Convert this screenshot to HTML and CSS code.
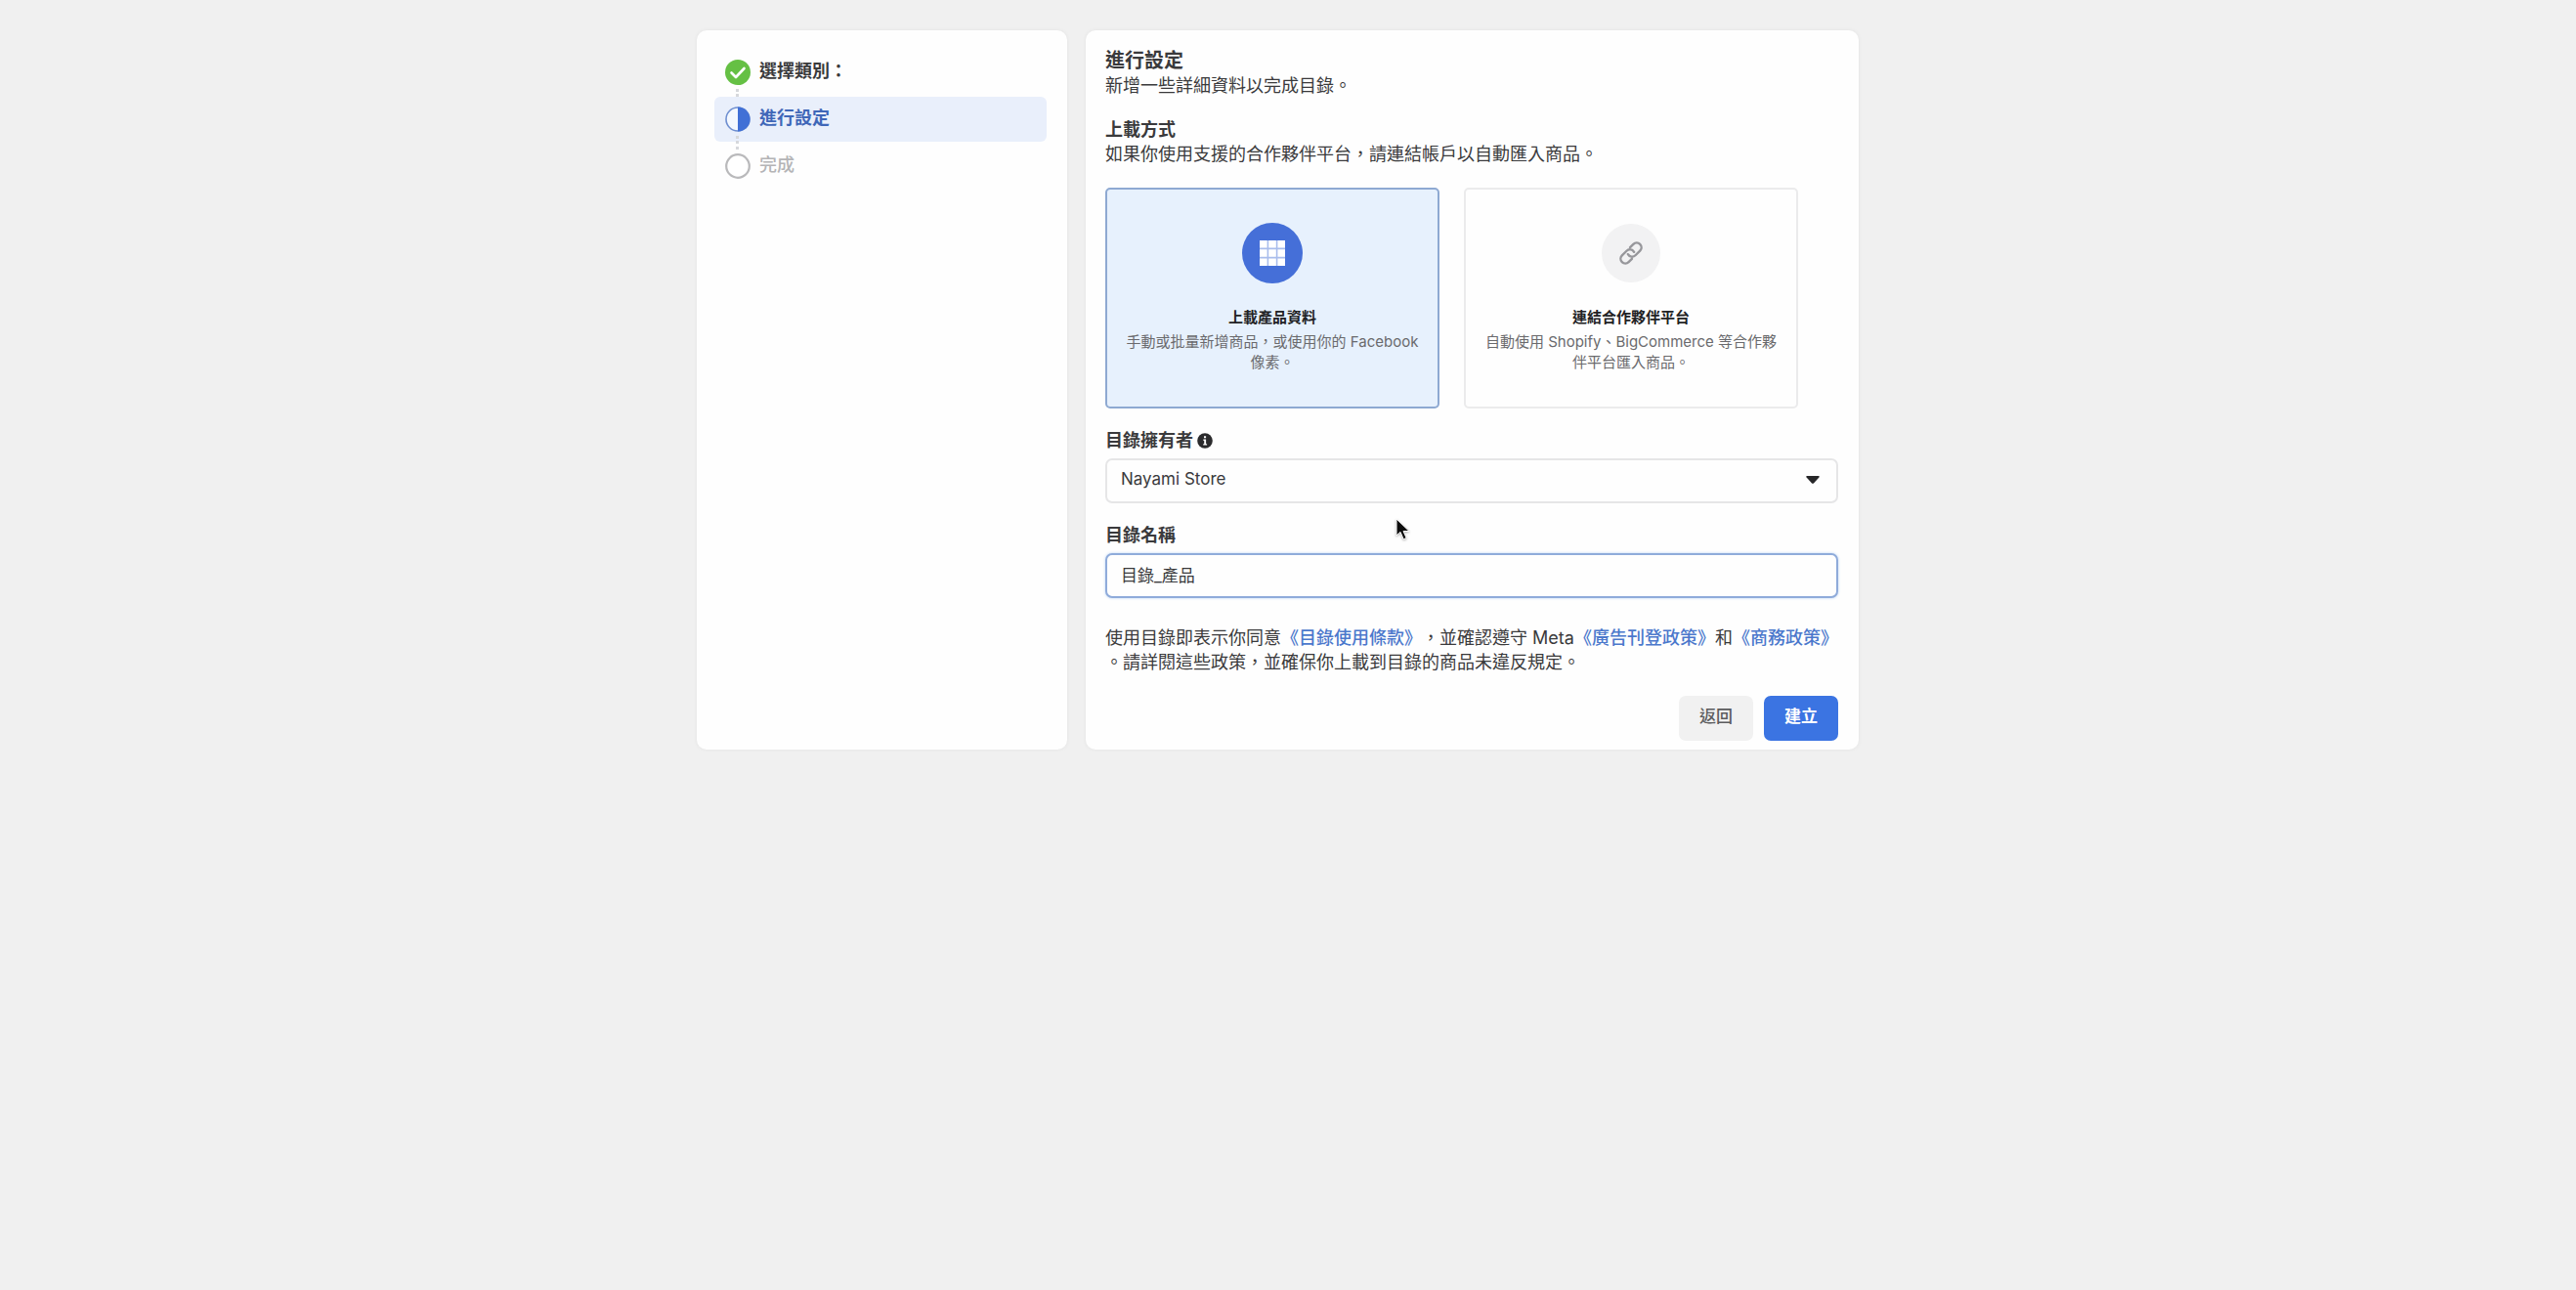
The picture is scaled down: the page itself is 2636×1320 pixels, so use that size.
FILE: index.html
```html
<!DOCTYPE html>
<html lang="zh-Hant">
<head>
<meta charset="utf-8">
<meta name="viewport" content="width=device-width, initial-scale=1">
<title>進行設定</title>
<link rel="stylesheet" href="styles.css">
</head>
<body>
<div class="page">
  <nav class="panel steps" aria-label="步驟">
    <ol class="step-list">
      <li class="step done">
        <svg class="step-icon" viewBox="0 0 26 26" aria-hidden="true"><circle cx="13" cy="13" r="13" fill="#65c044"/><path d="M6.5 13.5l4.5 4.5 8.5-9" fill="none" stroke="#fff" stroke-width="2.6" stroke-linecap="round" stroke-linejoin="round"/></svg>
        <span>選擇類別：</span>
      </li>
      <li class="step current" aria-current="step">
        <svg class="step-icon" viewBox="0 0 26 26" aria-hidden="true"><circle cx="13" cy="13" r="12" fill="#f4f8ff" stroke="#6f8fd0" stroke-width="1.6"/><path d="M13 .5a12.5 12.5 0 0 1 0 25z" fill="#4170d6"/></svg>
        <span>進行設定</span>
      </li>
      <li class="step todo">
        <svg class="step-icon" viewBox="0 0 26 26" aria-hidden="true"><circle cx="13" cy="13" r="11.8" fill="#fff" stroke="#b9b9bb" stroke-width="2.2"/></svg>
        <span>完成</span>
      </li>
    </ol>
  </nav>

  <main class="panel">
    <form class="setup">
      <header class="intro">
        <h1>進行設定</h1>
        <p>新增一些詳細資料以完成目錄。</p>
      </header>

      <section class="method">
        <h2>上載方式</h2>
        <p>如果你使用支援的合作夥伴平台，請連結帳戶以自動匯入商品。</p>
        <div class="options">
          <label class="option">
            <input type="radio" name="method" value="upload" checked>
            <svg class="option-icon" viewBox="0 0 62 62" aria-hidden="true"><circle cx="31" cy="31" r="31" fill="#456fd8"/><rect x="18" y="18" width="26" height="26" fill="#a9bdec"/><path d="M18 18h7.6v7.6H18zM27.2 18h7.6v7.6h-7.6zM36.4 18H44v7.6h-7.6zM18 27.2h7.6v7.6H18zM27.2 27.2h7.6v7.6h-7.6zM36.4 27.2H44v7.6h-7.6zM18 36.4h7.6V44H18zM27.2 36.4h7.6V44h-7.6zM36.4 36.4H44V44h-7.6z" fill="#fff"/></svg>
            <strong>上載產品資料</strong>
            <span>手動或批量新增商品，或使用你的 Facebook 像素。</span>
          </label>
          <label class="option">
            <input type="radio" name="method" value="partner">
            <svg class="option-icon" viewBox="0 0 62 62" aria-hidden="true"><circle cx="31" cy="31" r="30" fill="#f2f2f3"/><g transform="rotate(-45 31 31)" fill="none" stroke="#97979b" stroke-width="2.4" stroke-linecap="round"><path d="M27.500 35.800H22.800a4.800 4.800 0 0 1 0-9.600h6.600a4.800 4.800 0 0 1 4.600 6.200"/><path d="M34.500 26.200h4.700a4.800 4.800 0 0 1 0 9.600h-6.600a4.800 4.800 0 0 1-4.600-6.200"/></g></svg>
            <strong>連結合作夥伴平台</strong>
            <span>自動使用 Shopify、BigCommerce 等合作夥伴平台匯入商品。</span>
          </label>
        </div>
      </section>

      <div class="field">
        <div class="field-label">
          <label for="owner">目錄擁有者</label>
          <svg class="info" viewBox="0 0 16 16" aria-hidden="true"><circle cx="8" cy="8" r="7.8" fill="#2b2b2d"/><path d="M6.4 6.6h2.7v4.6h1v1.4H6.2v-1.4h1V8h-.8zM7 3.2h2.1v2.1H7z" fill="#fff"/></svg>
        </div>
        <div class="select-wrap">
          <select class="control" id="owner"><option>Nayami Store</option></select>
          <svg class="caret" viewBox="0 0 14 8" aria-hidden="true"><path d="M1 0h12q1.200 .5.4 1.600L8.200 7.300q-1.200 1.100-2.400 0L.6 1.600Q-.2.5 1 0z" fill="#262628"/></svg>
        </div>
      </div>

      <div class="field">
        <div class="field-label"><label for="name">目錄名稱</label></div>
        <input class="control focused" id="name" type="text" value="目錄_產品">
      </div>

      <p class="terms">使用目錄即表示你同意<a href="#">《目錄使用條款》</a>，並確認遵守 Meta<a href="#">《廣告刊登政策》</a>和<a href="#">《商務政策》</a><br>。請詳閱這些政策，並確保你上載到目錄的商品未違反規定。</p>

      <footer class="actions">
        <button class="btn" type="button">返回</button>
        <button class="btn primary" type="submit">建立</button>
      </footer>
    </form>
    <svg class="pointer" viewBox="0 0 16 24" aria-hidden="true"><path d="M1 1v17l4-3.600 3.200 7.400 3-1.300L8 13.500h6z" fill="#0c0c0c" stroke="#fff" stroke-width="1"/></svg>
  </main>
</div>
</body>
</html>
```
FILE: styles.css
```css
* {
  box-sizing: border-box;
}

body {
  margin: 0;
  min-height: 100vh;
  background: #f0f0f0;
  color: #3a3a3c;
  font-family: Inter, "Noto Sans CJK TC", sans-serif;
  font-size: 18px;
  line-height: 25px;
  text-spacing-trim: space-all;
}

h1, h2, p, ol {
  margin: 0;
  padding: 0;
}

.page {
  display: grid;
  grid-template-columns: minmax(0, 379px) minmax(0, 791px);
  justify-content: center;
  gap: 19px;
  padding: 31px 21px 31px 0;
}

.panel {
  position: relative;
  background: #fefefe;
  border-radius: 10px;
  box-shadow: 0 0 4px rgba(0, 0, 0, 0.06);
}

/* Step list */
.steps {
  padding: 20px 21px 20px 18px;
}

.step-list {
  display: flex;
  flex-direction: column;
  gap: 2px;
  list-style: none;
}

.step {
  position: relative;
  display: flex;
  align-items: center;
  gap: 9px;
  height: 46px;
  padding: 0 11px;
  border-radius: 6px;
  font-weight: 700;
}

.step-icon {
  width: 26px;
  height: 26px;
}

.step span {
  padding-bottom: 4px;
}

.step:not(:last-child)::after {
  content: "";
  position: absolute;
  left: 22px;
  top: 40px;
  height: 14px;
  border-left: 3px dotted #d6d8dc;
}

.current {
  background: #e9effb;
  color: #3f67b8;
}

.todo {
  color: #b4b4b6;
  font-weight: 500;
}

/* Setup form */
.setup {
  display: flex;
  flex-direction: column;
  gap: 20px;
  padding: 19px 21px 9px 20px;
}

h1 {
  font-size: 20px;
  line-height: 25px;
}

h2 {
  font-size: 18px;
  line-height: 25px;
}

.options {
  display: grid;
  grid-template-columns: repeat(2, minmax(0, 342px));
  gap: 25px;
  margin-top: 22px;
}

.option {
  display: flex;
  flex-direction: column;
  align-items: center;
  min-height: 226px;
  padding: 34px 18px;
  border: 2px solid #ebebec;
  border-radius: 5px;
  font-size: 15px;
  line-height: 21px;
  text-align: center;
  color: #6a6a6d;
}

.option:has(:checked) {
  background: #e7f1fd;
  border-color: #8ea9d2;
}

.option input {
  position: absolute;
  opacity: 0;
}

.option-icon {
  width: 62px;
  height: 62px;
  margin-bottom: 24px;
}

.option strong {
  margin-bottom: 4px;
  color: #222224;
}

.field {
  display: flex;
  flex-direction: column;
  gap: 6px;
}

.field-label {
  display: flex;
  align-items: center;
  gap: 4px;
  font-weight: 600;
}

.info {
  width: 16px;
  height: 16px;
}

.control {
  display: block;
  width: 100%;
  height: 46px;
  padding: 0 14px 4px;
  border: 2px solid #e6e6e7;
  border-radius: 7px;
  background: #fefefe;
  color: #3a3a3c;
  font: inherit;
  font-size: 17px;
  appearance: none;
  outline: none;
}

.focused {
  border-color: #8fabda;
  box-shadow: 0 0 3px #b9d3f5;
}

.select-wrap {
  position: relative;
}

.caret {
  position: absolute;
  right: 19px;
  top: 18px;
  width: 14px;
  height: 8px;
  pointer-events: none;
}

.terms {
  margin-top: 8px;
  white-space: nowrap;
}

a {
  color: #4b78cc;
  font-weight: 500;
  text-decoration: none;
}

.actions {
  display: flex;
  justify-content: flex-end;
  gap: 11px;
  margin-top: 2px;
}

.btn {
  width: 76px;
  height: 46px;
  padding: 0 0 4px;
  border: 0;
  border-radius: 7px;
  background: #f1f1f1;
  color: #5c5c5e;
  font: inherit;
  font-size: 17px;
  font-weight: 500;
}

.primary {
  background: #3b74e2;
  color: #fff;
  font-weight: 700;
}

.pointer {
  position: absolute;
  left: 317px;
  top: 499px;
  width: 16px;
  height: 24px;
  filter: drop-shadow(0 1px 1px rgba(0, 0, 0, 0.3));
}
```
